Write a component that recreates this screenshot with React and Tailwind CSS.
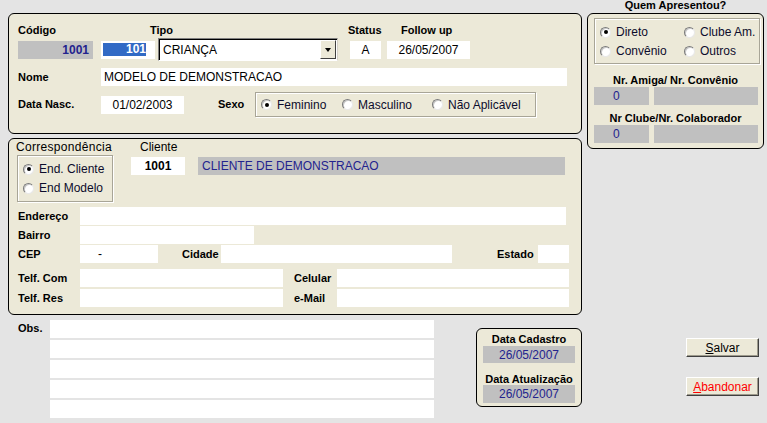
import React from 'react';

// Cadastro de modelo – XP style form

const Label = ({ children, className = '' }) => (
  <div className={`text-[11px] font-bold leading-[13px] text-black whitespace-nowrap ${className}`}>{children}</div>
);

const Box = ({ children, className = '' }) => (
  <div className={`bg-white text-[12px] leading-[18px] text-black whitespace-nowrap overflow-hidden ${className}`}>{children}</div>
);

const GrayBox = ({ children, className = '' }) => (
  <div className={`bg-[#c0c0c0] text-[12px] leading-[18px] text-[#23238e] whitespace-nowrap overflow-hidden ${className}`}>{children}</div>
);

const Radio = ({ checked, label, className = '' }) => (
  <div className={`flex items-center gap-[5px] h-[16px] text-[12px] leading-[16px] text-[#0c0c2c] whitespace-nowrap ${className}`}>
    <span className="w-[11px] h-[11px] shrink-0 rounded-full bg-white border border-t-[#7a7a7a] border-l-[#7a7a7a] border-b-[#e8e8e8] border-r-[#e8e8e8] shadow-[inset_1px_1px_0_#c8c8c8] flex items-center justify-center">
      {checked && <span className="w-[4px] h-[4px] rounded-full bg-black" />}
    </span>
    <span>{label}</span>
  </div>
);

const Group = ({ children, className = '' }) => (
  <div className={`border border-[#a8a597] shadow-[1px_1px_0_#ffffff,inset_1px_1px_0_#ffffff] ${className}`}>{children}</div>
);

const Button = ({ children, className = '' }) => (
  <button className={`w-[73px] h-[19px] bg-[#ece9d8] border border-t-white border-l-white border-b-[#404040] border-r-[#404040] shadow-[inset_-1px_-1px_0_#9d9a8c] text-[12px] leading-[16px] ${className}`}>
    {children}
  </button>
);

export default function App() {
  return (
    <div className="w-[767px] h-[423px] bg-[#e4e4e4] overflow-hidden font-['Liberation_Sans',Arial,sans-serif] text-black">
      <div className="flex items-start">
        {/* Left column */}
        <div className="ml-[8px] mt-[13px] w-[574px] flex flex-col gap-[4px]">
          {/* Panel 1 */}
          <div className="h-[121px] rounded-[6px] border border-black bg-[#ece9d8] pt-[10px] pl-[9px]">
            <div className="flex h-[13px]">
              <Label className="w-[132px]">Código</Label>
              <Label className="w-[198px]">Tipo</Label>
              <Label className="w-[53px]">Status</Label>
              <Label>Follow up</Label>
            </div>
            <div className="mt-[1px] flex items-center h-[23px]">
              <GrayBox className="w-[75px] h-[18px] text-right pr-[4px] font-bold text-[#2a1e70]">1001</GrayBox>
              <Box className="ml-[8px] w-[54px] h-[18px] flex items-center pl-[2px]">
                <span className="w-[43px] h-[13px] bg-[#316ac5] text-white font-bold text-right leading-[13px]">101</span>
              </Box>
              <div className="ml-[3px] w-[180px] h-[23px] bg-white border border-t-[#808080] border-l-[#808080] border-b-white border-r-[#d4d0c8] shadow-[inset_1px_1px_0_#000] flex items-center justify-between">
                <span className="pl-[4px] text-[12px] leading-[16px]">CRIANÇA</span>
                <span className="w-[16px] h-[19px] mr-[1px] bg-[#ece9d8] border border-t-white border-l-white border-b-[#404040] border-r-[#404040] flex items-center justify-center">
                  <span className="w-0 h-0 border-l-[3px] border-r-[3px] border-t-[4px] border-l-transparent border-r-transparent border-t-black" />
                </span>
              </div>
              <Box className="ml-[12px] w-[31px] h-[18px] text-center">A</Box>
              <Box className="ml-[6px] w-[83px] h-[18px] text-center">26/05/2007</Box>
            </div>
            <div className="mt-[7px] flex items-center">
              <Label className="w-[83px]">Nome</Label>
              <Box className="w-[466px] h-[18px] pl-[3px]">MODELO DE DEMONSTRACAO</Box>
            </div>
            <div className="mt-[6px] flex items-center h-[25px]">
              <Label className="w-[83px]">Data Nasc.</Label>
              <Box className="w-[83px] h-[18px] text-center">01/02/2003</Box>
              <Label className="ml-[34px] w-[37px]">Sexo</Label>
              <Group className="w-[281px] h-[25px] flex items-center pl-[5px]">
                <Radio checked label="Feminino" className="w-[81px]" />
                <Radio label="Masculino" className="w-[90px]" />
                <Radio label="Não Aplicável" />
              </Group>
            </div>
          </div>

          {/* Panel 2 */}
          <div className="h-[177px] rounded-[6px] border border-black bg-[#ece9d8] pt-[1px]">
            <div className="flex items-start">
              <div className="pl-[7px] w-[122px]">
                <div className="h-[14px] text-[12px] leading-[14px] tracking-[0.3px]">Correspondência</div>
                <Group className="mt-[1px] ml-[1px] w-[96px] h-[47px] pt-[5px] pl-[5px] flex flex-col gap-[3px]">
                  <Radio checked label="End. Cliente" />
                  <Radio label="End Modelo" />
                </Group>
              </div>
              <div>
                <div className="pl-[9px] h-[14px] text-[12px] leading-[14px]">Cliente</div>
                <div className="mt-[3px] flex">
                  <Box className="w-[54px] h-[18px] text-center font-bold">1001</Box>
                  <GrayBox className="ml-[13px] w-[367px] h-[18px] pl-[4px] text-[#1f1fa0]">CLIENTE DE DEMONSTRACAO</GrayBox>
                </div>
              </div>
            </div>
            <div className="pl-[9px]">
              <div className="mt-[5px] flex items-center">
                <Label className="w-[62px]">Endereço</Label>
                <Box className="w-[486px] h-[18px]" />
              </div>
              <div className="mt-[1px] flex items-center">
                <Label className="w-[62px]">Bairro</Label>
                <Box className="w-[174px] h-[18px]" />
              </div>
              <div className="mt-[1px] flex items-center">
                <Label className="w-[62px]">CEP</Label>
                <Box className="w-[78px] h-[18px] pl-[18px]">-</Box>
                <Label className="ml-[24px] w-[39px]">Cidade</Label>
                <Box className="w-[231px] h-[18px]" />
                <Label className="ml-[45px] w-[41px]">Estado</Label>
                <Box className="w-[31px] h-[18px]" />
              </div>
              <div className="mt-[6px] flex items-center">
                <Label className="w-[62px]">Telf. Com</Label>
                <Box className="w-[203px] h-[18px]" />
                <Label className="ml-[11px] w-[43px]">Celular</Label>
                <Box className="w-[232px] h-[18px]" />
              </div>
              <div className="mt-[2px] flex items-center">
                <Label className="w-[62px]">Telf. Res</Label>
                <Box className="w-[203px] h-[18px]" />
                <Label className="ml-[11px] w-[43px]">e-Mail</Label>
                <Box className="w-[232px] h-[18px]" />
              </div>
            </div>
          </div>
        </div>

        {/* Right column */}
        <div className="ml-[5px] w-[177px]">
          <Label className="h-[13px] -mt-[1px] text-center">Quem Apresentou?</Label>
          <div className="h-[136px] mt-[1px] rounded-[6px] border border-black bg-[#ece9d8]">
            <Group className="mt-[4px] ml-[6px] w-[166px] h-[46px] pt-[5px] pl-[5px] flex flex-col gap-[3px]">
              <div className="flex">
                <Radio checked label="Direto" className="w-[84px]" />
                <Radio label="Clube Am." />
              </div>
              <div className="flex">
                <Radio label="Convênio" className="w-[84px]" />
                <Radio label="Outros" />
              </div>
            </Group>
            <Label className="mt-[10px] text-center">Nr. Amiga/ Nr. Convênio</Label>
            <div className="ml-[6px] flex">
              <GrayBox className="w-[55px] h-[18px] pl-[19px]">0</GrayBox>
              <GrayBox className="ml-[5px] w-[104px] h-[18px]" />
            </div>
            <Label className="mt-[7px] text-center">Nr Clube/Nr. Colaborador</Label>
            <div className="ml-[6px] flex">
              <GrayBox className="w-[55px] h-[18px] pl-[19px]">0</GrayBox>
              <GrayBox className="ml-[5px] w-[104px] h-[18px]" />
            </div>
          </div>
        </div>
      </div>

      {/* Bottom */}
      <div className="flex items-start">
        <div className="ml-[18px] flex items-start">
          <Label className="w-[32px] mt-[7px]">Obs.</Label>
          <div className="mt-[5px] w-[384px] flex flex-col gap-[2px]">
            <Box className="h-[18px]" />
            <Box className="h-[18px]" />
            <Box className="h-[18px]" />
            <Box className="h-[18px]" />
            <Box className="h-[18px]" />
          </div>
        </div>
        <div className="ml-[42px] mt-[13px] w-[106px] h-[79px] rounded-[6px] border border-black bg-[#ece9d8] pt-[4px]">
          <Label className="text-center">Data Cadastro</Label>
          <GrayBox className="ml-[6px] w-[92px] h-[17px] leading-[17px] text-center">26/05/2007</GrayBox>
          <Label className="mt-[10px] h-[12px] text-center">Data Atualização</Label>
          <GrayBox className="ml-[6px] w-[92px] h-[18px] text-center">26/05/2007</GrayBox>
        </div>
        <div className="ml-[104px] mt-[23px] flex flex-col gap-[20px]">
          <Button><span className="underline">S</span>alvar</Button>
          <Button className="text-[#ff0000]"><span className="underline">A</span>bandonar</Button>
        </div>
      </div>
    </div>
  );
}
